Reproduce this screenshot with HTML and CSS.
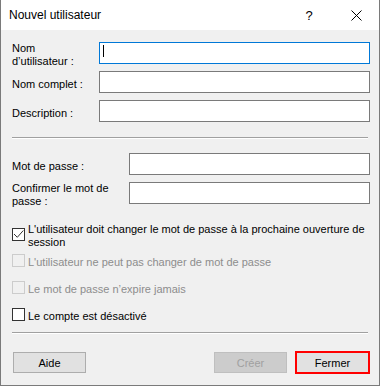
FILE: index.html
```html
<!DOCTYPE html>
<html lang="fr">
<head>
  <meta charset="UTF-8">
  <title>Nouvel utilisateur</title>
  <link rel="stylesheet" href="styles.css">
</head>
<body>

  <div class="dialog">
    <div class="titlebar">
      <span class="title">Nouvel utilisateur</span>
      <span class="help">?</span>
      <span class="close">
        <svg width="11" height="11" viewBox="0 0 11 11"><path d="M0.5 0.5L10.5 10.5M10.5 0.5L0.5 10.5" stroke="#000" stroke-width="1" fill="none"/></svg>
      </span>
    </div>

    <div class="content">
      <div class="rows">
        <div class="row">
          <label>Nom<br>d’utilisateur :</label>
          <span class="field focused"><input type="text"><span class="caret"></span></span>
        </div>
        <div class="row">
          <label>Nom complet :</label>
          <span class="field"><input type="text"></span>
        </div>
        <div class="row">
          <label>Description :</label>
          <span class="field"><input type="text"></span>
        </div>
      </div>

      <div class="sep sep-top"></div>

      <div class="rows rows-pass">
        <div class="row">
          <label>Mot de passe :</label>
          <span class="field"><input type="password"></span>
        </div>
        <div class="row">
          <label>Confirmer le mot de passe :</label>
          <span class="field"><input type="password"></span>
        </div>
      </div>

      <div class="checks">
        <div class="check check-multi">
          <span class="box">
            <svg width="11" height="11" viewBox="0 0 11 11"><path d="M1 5L4.3 8.3L10.3 1.5" stroke="#333" stroke-width="1" fill="none"/></svg>
          </span>
          <span class="text">L'utilisateur doit changer le mot de passe à la prochaine ouverture de session</span>
        </div>
        <div class="check disabled">
          <span class="box"></span>
          <span class="text">L'utilisateur ne peut pas changer de mot de passe</span>
        </div>
        <div class="check disabled">
          <span class="box"></span>
          <span class="text">Le mot de passe n’expire jamais</span>
        </div>
        <div class="check">
          <span class="box"></span>
          <span class="text">Le compte est désactivé</span>
        </div>
      </div>

      <div class="sep sep-bottom"></div>

      <div class="footer">
        <button class="btn">Aide</button>
        <button class="btn btn-create" disabled>Créer</button>
        <button class="btn btn-close">Fermer</button>
      </div>
    </div>
  </div>

</body>
</html>
```

FILE: styles.css
```css
body {
  margin: 0;
  font-family: 'Liberation Sans', Arial, sans-serif;
  font-size: 11px;
  color: #000;
}

.dialog {
  width: 380px;
  height: 386px;
  box-sizing: border-box;
  border: 1px solid #7a7a7a;
  border-top: none;
  background-color: #f0f0f0;
}

.titlebar {
  height: 30px;
  background-color: #fff;
  display: flex;
  align-items: center;
  padding-left: 8px;
  font-size: 12px;
}

.title {
  flex: 1;
}

.help {
  width: 10px;
  text-align: center;
  font-size: 13px;
  margin-right: 37px;
}

.close {
  display: flex;
  margin-right: 17px;
}

.content {
  padding: 12px 9px 0 11px;
}

.rows {
  display: flex;
  flex-direction: column;
  gap: 7px;
}

.row {
  display: flex;
  align-items: center;
  height: 22px;
}

.row label {
  width: 87px;
  flex: none;
  line-height: 13px;
  padding-top: 4px;
}

.rows-pass {
  margin-top: 14px;
}

.rows-pass label {
  width: 117px;
}

.field {
  flex: 1;
  display: flex;
  position: relative;
}

.field input {
  flex: 1;
  min-width: 0;
  height: 22px;
  box-sizing: border-box;
  margin: 0;
  padding: 0 3px;
  border: 1px solid #7a7a7a;
  background-color: #fff;
  font: inherit;
  outline: none;
}

.field.focused input {
  border-color: #0078d7;
}

.caret {
  position: absolute;
  left: 4px;
  top: 3px;
  width: 1px;
  height: 12px;
  background-color: #000;
}

.sep {
  height: 0;
  margin-right: 2px;
  border-top: 1px solid #a0a0a0;
  border-bottom: 1px solid #fff;
}

.sep-top {
  margin-top: 15px;
}

.sep-bottom {
  margin-top: 9px;
}

.checks {
  margin-top: 19px;
  display: flex;
  flex-direction: column;
  gap: 12px;
}

.check {
  display: flex;
  gap: 3px;
  line-height: 13px;
}

.check .text {
  padding-top: 2px;
}

.check-multi {
  margin-bottom: -7px;
}

.check-multi .box {
  margin-top: 5px;
}

.check-multi .text {
  padding-top: 0;
}

.box {
  width: 13px;
  height: 13px;
  flex: none;
  box-sizing: border-box;
  border: 1px solid #333;
  background-color: #fff;
  display: flex;
}

.check.disabled .box {
  border-color: #cccccc;
  background-color: #f0f0f0;
}

.check.disabled .text {
  color: #8d8d8d;
}

.footer {
  margin-top: 17px;
  padding-left: 1px;
  display: flex;
  align-items: center;
}

.btn {
  width: 73px;
  height: 21px;
  padding: 0;
  border: 1px solid #adadad;
  background-color: #e1e1e1;
  font: inherit;
  color: #000;
}

.btn-create {
  margin-left: auto;
  background-color: #cccccc;
  border-color: #bfbfbf;
  color: #a0a0a0;
}

.btn-close {
  width: 75px;
  height: 23px;
  margin-left: 8px;
  border: 2px solid #f00;
}
```
